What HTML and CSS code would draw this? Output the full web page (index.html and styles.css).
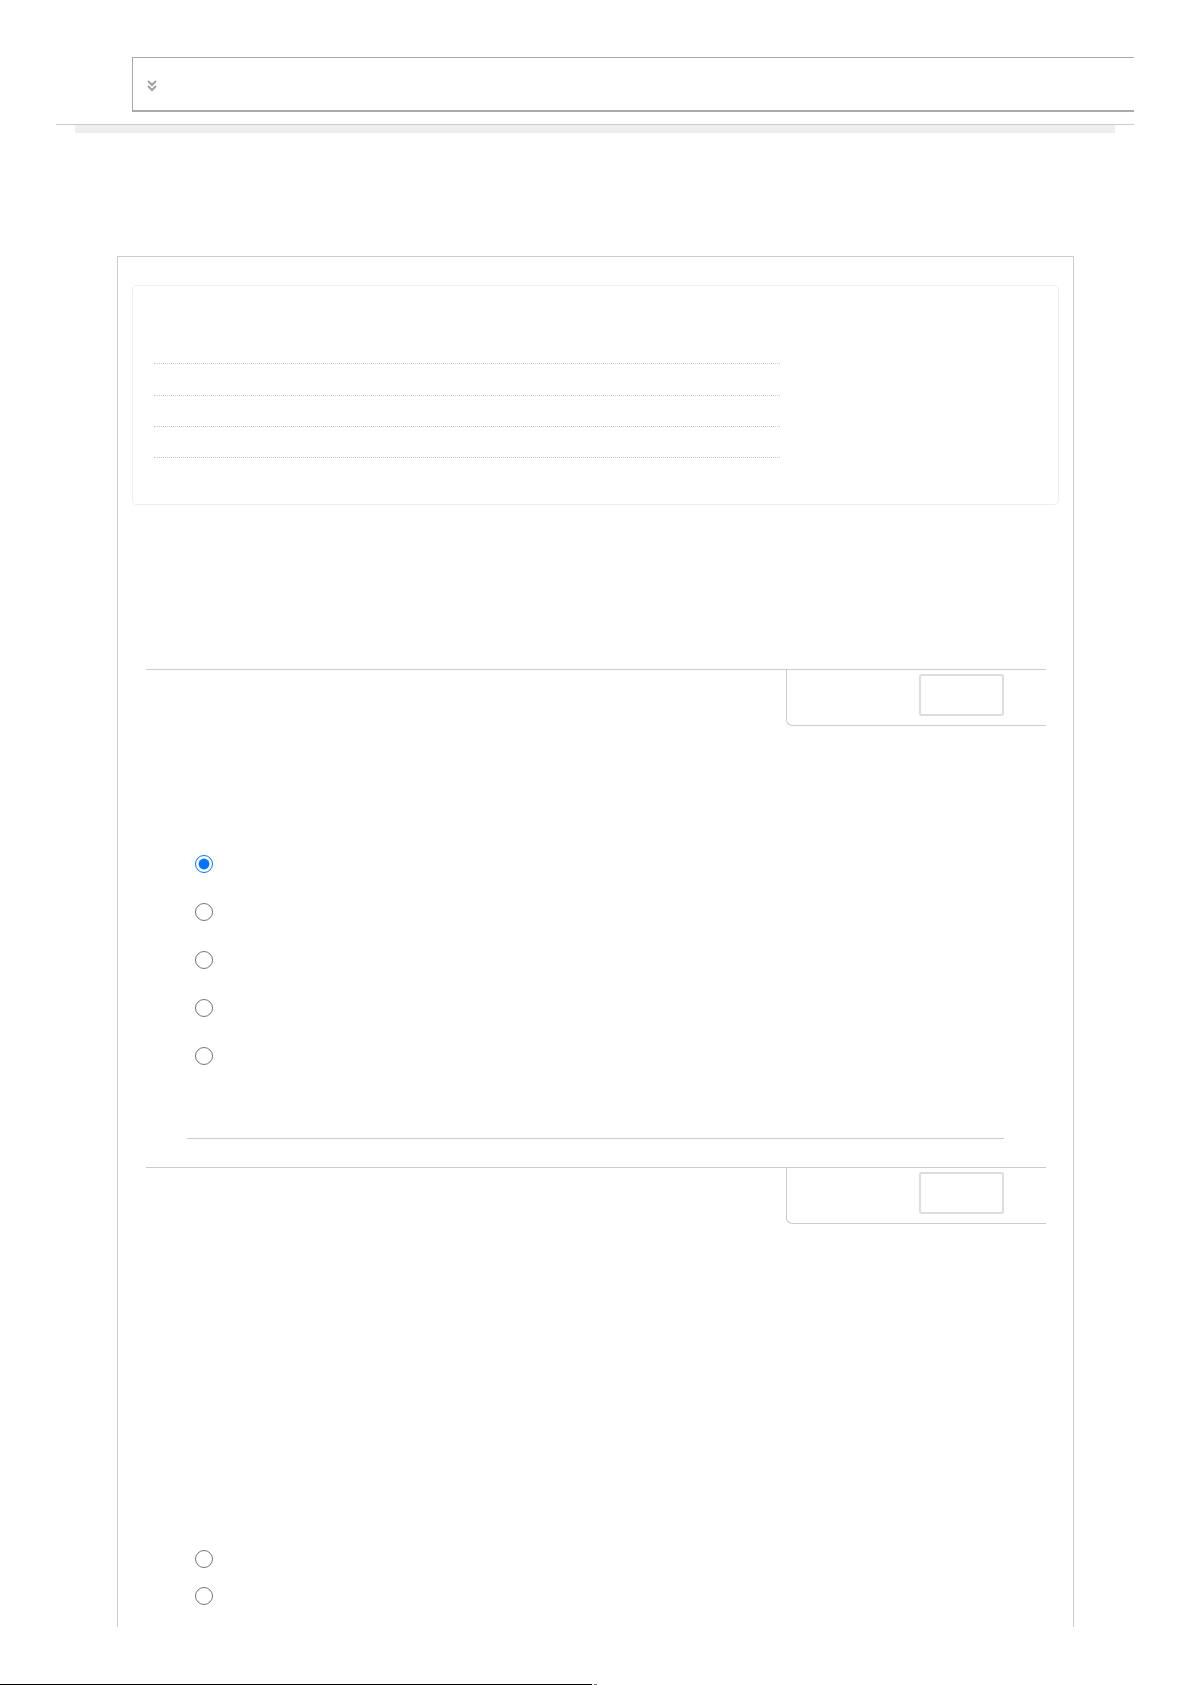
FILE: index.html
```html
<!DOCTYPE html>
<html lang="en">
    <head>
        <meta charset="UTF-8">
        <meta name="viewport" content="width=device-width, initial-scale=1.0">
        <title>Quiz</title>
        <link rel="stylesheet" href="styles.css">
    </head>

    <body>
        <div class="page-top">
            <div class="toolbar">
                <svg class="toggle-icon" width="10" height="12" viewBox="0 0 10 12">
                    <path d="M1 1 L5 5 L9 1" />
                    <path d="M1 6 L5 10 L9 6" />
                </svg>
            </div>
            <div class="top-rule">
                <div class="top-band"></div>
            </div>
        </div>

        <div class="quiz">
            <div class="summary">
                <div class="dot-row first"></div>
                <div class="dot-row"></div>
                <div class="dot-row"></div>
                <div class="dot-row last"></div>
            </div>

            <div class="question q-one">
                <div class="question-head">
                    <div class="grade-panel">
                        <div class="grade-box"></div>
                    </div>
                </div>
                <ul class="answers">
                    <li><input type="radio" name="q1" checked></li>
                    <li><input type="radio" name="q1"></li>
                    <li><input type="radio" name="q1"></li>
                    <li><input type="radio" name="q1"></li>
                    <li><input type="radio" name="q1"></li>
                </ul>
                <div class="separator"></div>
            </div>

            <div class="question q-two">
                <div class="question-head">
                    <div class="grade-panel">
                        <div class="grade-box"></div>
                    </div>
                </div>
                <ul class="answers short">
                    <li><input type="radio" name="q2"></li>
                    <li><input type="radio" name="q2"></li>
                </ul>
            </div>
        </div>

        <div class="bottom-line"><span class="line"></span><span class="mark"></span></div>
    </body>
</html>
```

FILE: styles.css
```css
body {
    font-family: "Liberation Sans", Arial, sans-serif;
    margin: 0;
    background-color: #ffffff;
    color: #333;
}

/* top strip */
.page-top {
    margin-left: 56px;
    width: 1078px;
    overflow: hidden;
}

.toolbar {
    margin: 57px 0 0 76px;
    height: 55px;
    box-sizing: border-box;
    border: 1px solid #aaa;
    border-bottom-width: 2px;
    border-right: none;
    padding: 22px 0 0 14px;
}

.toggle-icon {
    display: block;
}

.toggle-icon path {
    fill: none;
    stroke: #a0a0a0;
    stroke-width: 2;
}

.top-rule {
    margin-top: 12px;
    border-top: 1px solid #ccc;
}

.top-band {
    margin: 0 19px;
    height: 8px;
    background-color: #eee;
}

/* quiz frame */
.quiz {
    margin: 123px 0 0 117px;
    width: 957px;
    height: 1371px;
    box-sizing: border-box;
    border: 1px solid #ccc;
    border-bottom: none;
    padding: 28px 14px 0 14px;
    overflow: hidden;
}

.summary {
    height: 220px;
    box-sizing: border-box;
    border: 1px solid #eee;
    border-radius: 4px;
    padding: 77px 0 0 21px;
}

.dot-row {
    width: 626px;
    height: 30px;
    border-top: 1px dotted #c8c8c8;
}

.dot-row.first {
    height: 31px;
}

.dot-row.last {
    height: 0;
}

/* questions */
.question {
    margin: 0 13px 0 14px;
}

.q-one {
    margin-top: 164px;
}

.q-two {
    margin-top: 28px;
}

.question-head {
    display: flex;
    justify-content: flex-end;
    border-top: 1px solid #ccc;
}

.grade-panel {
    width: 260px;
    height: 56px;
    box-sizing: border-box;
    border-left: 1px solid #ccc;
    border-bottom: 1px solid #ccc;
    border-bottom-left-radius: 6px;
    display: flex;
    justify-content: flex-end;
    padding: 4px 42px 0 0;
}

.grade-box {
    width: 85px;
    height: 42px;
    box-sizing: border-box;
    border: 2px solid #ddd;
    border-radius: 3px;
}

.answers {
    list-style: none;
    margin: 0;
    padding: 114px 0 0 49px;
}

.answers li {
    height: 48px;
    box-sizing: border-box;
    padding-top: 15px;
}

.answers input[type="radio"] {
    display: block;
    width: 18px;
    height: 18px;
    margin: 0;
}

.answers.short {
    padding-top: 316px;
}

.answers.short li {
    height: 37px;
    padding-top: 10px;
}

.separator {
    margin: 58px 0 0 41px;
    width: 817px;
    border-top: 1px solid #ccc;
}

/* bottom edge */
.bottom-line {
    display: flex;
    margin-top: 57px;
    height: 1px;
}

.bottom-line .line {
    width: 592px;
    background-color: #000;
}

.bottom-line .mark {
    margin-left: 2px;
    width: 3px;
    background-color: #7a6a9a;
}
```
